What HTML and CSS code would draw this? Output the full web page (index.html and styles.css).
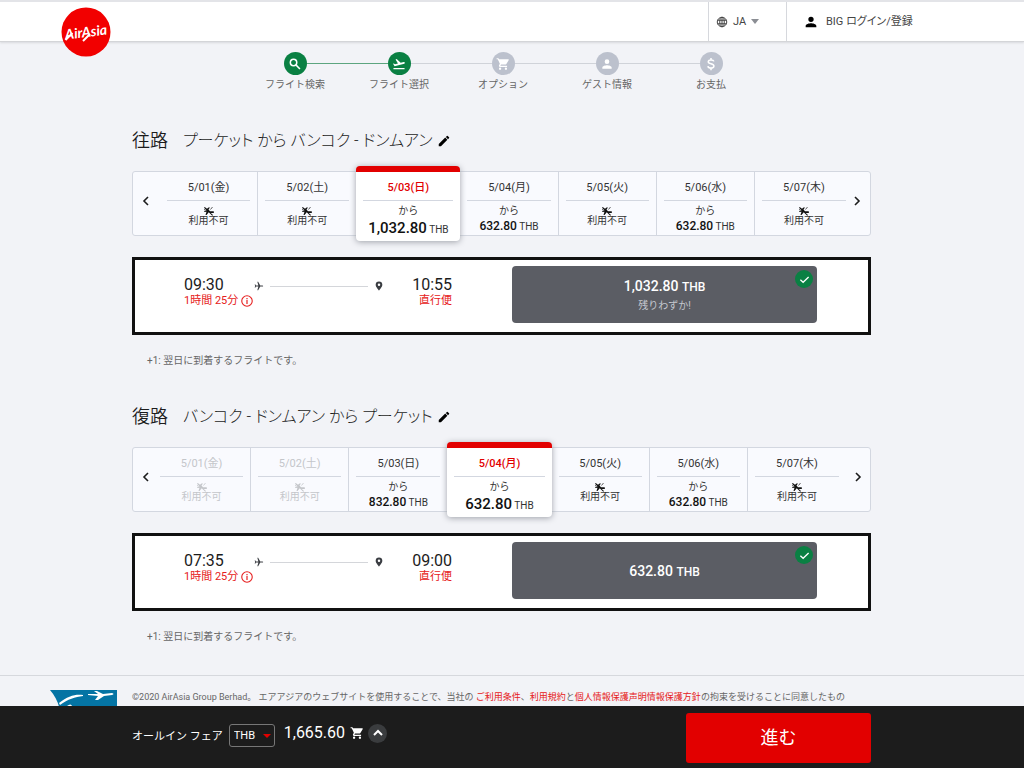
FILE: index.html
```html
<!DOCTYPE html>
<html lang="ja">
<head>
<meta charset="utf-8">
<meta name="viewport" content="width=device-width, initial-scale=1">
<title>AirAsia - フライト選択</title>
<link rel="stylesheet" href="styles.css">
</head>
<body>
<svg class="sprite" aria-hidden="true">
  <symbol id="edit" viewBox="0 0 24 24"><path d="M3 17.200V21h3.800L17.800 9.900l-3.700-3.700L3 17.200zM20.700 7a1 1 0 0 0 0-1.400L18.400 3.300a1 1 0 0 0-1.400 0l-1.800 1.800 3.700 3.700L20.700 7z"/></symbol>
  <symbol id="cart" viewBox="0 0 24 24"><path d="M7 18a2 2 0 1 0 0 4 2 2 0 0 0 0-4zM1 2v2h2l3.600 7.600-1.400 2.400C4.500 15.400 5.500 17 7 17h12v-2H7.400l1.200-2h7.400c.8 0 1.400-.4 1.800-1L21.900 5c.3-.6-.2-1-.9-1H5.200l-1-2H1zm16 16a2 2 0 1 0 0 4 2 2 0 0 0 0-4z"/></symbol>
  <symbol id="person" viewBox="0 0 24 24"><path d="M12 12a4 4 0 1 0 0-8 4 4 0 0 0 0 8zm0 2c-2.700 0-8 1.300-8 4v2h16v-2c0-2.700-5.300-4-8-4z"/></symbol>
  <symbol id="plane" viewBox="0 0 24 24"><path d="M22 12c0-.8-.7-1.300-1.500-1.300H15L10 2H8l2.500 8.700H5L3.500 8.500H1.500L3 12l-1.500 3.500h2L5 13.300h5.500L8 22h2l5-8.700h5.500c.8 0 1.500-.5 1.500-1.300z"/></symbol>
  <symbol id="noplane" viewBox="0 0 24 24"><path d="M22 14c0-1-.7-1.700-1.500-1.700H14L11 9l3-4h-3L8 7.500 3.500 4 2 5.500l5 5-4 1.500-1 2 5-.5-2 6.500h2l4.500-5.500 7 7 1.500-1.500-4.500-4h5c.8 0 1.500-1 1.500-2z"/><path d="M15 9l4-5M2 9l3 1" fill="none" stroke="currentColor" stroke-width="1.600"/></symbol>
  <symbol id="pin" viewBox="0 0 24 24"><path d="M12 1a8 8 0 0 0-8 8c0 5.500 8 14 8 14s8-8.500 8-14a8 8 0 0 0-8-8zm0 11a3 3 0 1 1 0-6 3 3 0 0 1 0 6z"/></symbol>
  <symbol id="info" viewBox="0 0 24 24"><circle cx="12" cy="12" r="10.500" fill="none" stroke="currentColor" stroke-width="2.200"/><path d="M10.800 10h2.400v8h-2.400zM10.800 6h2.400v2.400h-2.400z"/></symbol>
  <symbol id="check" viewBox="0 0 24 24"><path d="M3 12.500l6 5.500L21 6.500" fill="none" stroke="currentColor" stroke-width="2.800"/></symbol>
  <symbol id="left" viewBox="0 0 12 12"><path d="M8 2L4 6l4 4" fill="none" stroke="currentColor" stroke-width="1.600"/></symbol>
  <symbol id="right" viewBox="0 0 12 12"><path d="M4 2l4 4-4 4" fill="none" stroke="currentColor" stroke-width="1.600"/></symbol>
</svg>

<header class="header">
  <a class="logo" href="#" aria-label="AirAsia"><svg viewBox="0 0 50 50" aria-hidden="true"><circle cx="25" cy="25" r="24.500"/><text x="25" y="30" text-anchor="middle" transform="rotate(-7 25 25)">AirAsia</text><path d="M4.500 33q4-4 7-7M22 34q4-4 7-7" fill="none" stroke="#fff" stroke-width="2"/></svg></a>
  <button class="language" type="button">
    <svg class="globe" viewBox="0 0 24 24" aria-hidden="true"><g fill="none" stroke="currentColor" stroke-width="2"><circle cx="12" cy="12" r="9.500"/><ellipse cx="12" cy="12" rx="4.500" ry="9.500"/><path d="M3 8.500h18M3 15.500h18M12 2.500v19"/></g></svg>
    JA<span class="caret"></span>
  </button>
  <button class="login" type="button"><svg aria-hidden="true"><use href="#person"/></svg>BIG ログイン/登録</button>
</header>

<main class="main">
  <ol class="steps">
    <li class="step done joined"><span class="dot"><svg viewBox="0 0 24 24"><g fill="none" stroke="currentColor" stroke-width="2.600"><circle cx="9.500" cy="9.500" r="5.500"/><path d="M13.500 13.500l7 7"/></g></svg></span><span class="label">フライト検索</span></li>
    <li class="step done"><span class="dot"><svg viewBox="0 0 24 24"><path d="M2.500 19h19v2h-19zM22 9.600c-.2-.8-1-1.300-1.800-1.100L14.900 10 8 3.600l-1.900.5 4.100 7.200-5 1.300-2-1.500-1.400.4 2.600 4.500 16.600-4.500c.8-.2 1.200-1 1-1.900z"/></svg></span><span class="label">フライト選択</span></li>
    <li class="step"><span class="dot"><svg><use href="#cart"/></svg></span><span class="label">オプション</span></li>
    <li class="step"><span class="dot"><svg><use href="#person"/></svg></span><span class="label">ゲスト情報</span></li>
    <li class="step"><span class="dot"><svg viewBox="0 0 24 24"><path d="M17 7.500C16.500 5.800 14.700 5 12 5 9.200 5 7.300 6.200 7.300 8.300 7.300 13 17 10.500 17 15.500c0 2.200-2 3.500-5 3.500s-5-1.200-5.300-3.300M12 1.500V5m0 14v3.500" fill="none" stroke="currentColor" stroke-width="2.600"/></svg></span><span class="label">お支払</span></li>
  </ol>

  <section class="leg">
    <div class="title"><h2>往路</h2><p>プーケット から バンコク - ドンムアン</p><button class="edit" type="button" aria-label="編集"><svg><use href="#edit"/></svg></button></div>
    <div class="dates outbound">
      <button class="arrow" type="button" aria-label="前へ"><svg><use href="#left"/></svg></button>
      <button class="day" type="button"><span class="date">5/01(金)</span><svg><use href="#noplane"/></svg><span class="none">利用不可</span></button>
      <button class="day" type="button"><span class="date">5/02(土)</span><svg><use href="#noplane"/></svg><span class="none">利用不可</span></button>
      <button class="day selected" type="button"><span class="date">5/03(日)</span><span class="from">から</span><span class="price"><b>1,032.80</b> THB</span></button>
      <button class="day" type="button"><span class="date">5/04(月)</span><span class="from">から</span><span class="price"><b>632.80</b> THB</span></button>
      <button class="day" type="button"><span class="date">5/05(火)</span><svg><use href="#noplane"/></svg><span class="none">利用不可</span></button>
      <button class="day" type="button"><span class="date">5/06(水)</span><span class="from">から</span><span class="price"><b>632.80</b> THB</span></button>
      <button class="day" type="button"><span class="date">5/07(木)</span><svg><use href="#noplane"/></svg><span class="none">利用不可</span></button>
      <button class="arrow next" type="button" aria-label="次へ"><svg><use href="#right"/></svg></button>
    </div>
    <div class="flight">
      <div class="depart"><span class="time">09:30</span><span class="detail">1時間 25分<svg><use href="#info"/></svg></span></div>
      <div class="route"><svg><use href="#plane"/></svg><span class="track"></span><svg><use href="#pin"/></svg></div>
      <div class="arrive"><span class="time">10:55</span><span class="detail">直行便</span></div>
      <button class="fare" type="button"><span class="amount">1,032.80 <small>THB</small></span><span class="left">残りわずか!</span><span class="tick"><svg><use href="#check"/></svg></span></button>
    </div>
    <p class="note">+1: 翌日に到着するフライトです。</p>
  </section>

  <section class="leg">
    <div class="title"><h2>復路</h2><p>バンコク - ドンムアン から プーケット</p><button class="edit" type="button" aria-label="編集"><svg><use href="#edit"/></svg></button></div>
    <div class="dates inbound">
      <button class="arrow" type="button" aria-label="前へ"><svg><use href="#left"/></svg></button>
      <button class="day" type="button" disabled><span class="date">5/01(金)</span><svg><use href="#noplane"/></svg><span class="none">利用不可</span></button>
      <button class="day" type="button" disabled><span class="date">5/02(土)</span><svg><use href="#noplane"/></svg><span class="none">利用不可</span></button>
      <button class="day" type="button"><span class="date">5/03(日)</span><span class="from">から</span><span class="price"><b>832.80</b> THB</span></button>
      <button class="day selected" type="button"><span class="date">5/04(月)</span><span class="from">から</span><span class="price"><b>632.80</b> THB</span></button>
      <button class="day" type="button"><span class="date">5/05(火)</span><svg><use href="#noplane"/></svg><span class="none">利用不可</span></button>
      <button class="day" type="button"><span class="date">5/06(水)</span><span class="from">から</span><span class="price"><b>632.80</b> THB</span></button>
      <button class="day" type="button"><span class="date">5/07(木)</span><svg><use href="#noplane"/></svg><span class="none">利用不可</span></button>
      <button class="arrow next" type="button" aria-label="次へ"><svg><use href="#right"/></svg></button>
    </div>
    <div class="flight">
      <div class="depart"><span class="time">07:35</span><span class="detail">1時間 25分<svg><use href="#info"/></svg></span></div>
      <div class="route"><svg><use href="#plane"/></svg><span class="track"></span><svg><use href="#pin"/></svg></div>
      <div class="arrive"><span class="time">09:00</span><span class="detail">直行便</span></div>
      <button class="fare" type="button"><span class="amount">632.80 <small>THB</small></span><span class="tick"><svg><use href="#check"/></svg></span></button>
    </div>
    <p class="note">+1: 翌日に到着するフライトです。</p>
  </section>
</main>

<footer class="footer">
  <svg class="badge" viewBox="0 0 67 40" aria-hidden="true"><path d="M0 0h67v40H12C12 24 9 10 0 0z" fill="#0474a4"/><path d="M9 13C18 6 25 4 33 5v1C25 7 18 9 10 15zM38 4h10l-4-3h3l6 3 9-1c2 .5 2 1.500 0 2l-8 1-6 4h-3l3-4-10-1zM17 16q4-3 5 0z" fill="#fff"/></svg>
  <p>©2020 AirAsia Group Berhad。 エアアジアのウェブサイトを使用することで、当社の <a href="#">ご利用条件</a>、<a href="#">利用規約</a>と<a href="#">個人情報保護声明情報保護方針</a>の拘束を受けることに同意したもの</p>
</footer>

<div class="bar">
  <label for="currency">オールイン フェア</label>
  <span class="pick"><select id="currency"><option>THB</option></select></span>
  <div class="summary">
    <span class="total">1,665.60</span>
    <svg class="basket" aria-hidden="true"><use href="#cart"/></svg>
    <button class="expand" type="button" aria-label="詳細"><svg viewBox="0 0 12 12"><path d="M2 8l4-4 4 4" fill="none" stroke="currentColor" stroke-width="2"/></svg></button>
  </div>
  <button class="go" type="button">進む</button>
</div>
</body>
</html>
```
FILE: styles.css
```css
* { box-sizing: border-box; }
body {
  margin: 0;
  min-height: 100vh;
  overflow: hidden;
  background: #f2f3f7;
  color: #1c1c1c;
  font: 400 11px/14px Roboto, "Noto Sans CJK JP", sans-serif;
}
h2, p, ol { margin: 0; padding: 0; font-weight: inherit; }
button { font: inherit; color: inherit; background: none; border: 0; padding: 0; }
svg { fill: currentColor; flex: none; }
.sprite { display: none; }

.header {
  display: flex;
  height: 42px;
  padding-left: 61px;
  background: #fff;
  border-top: 2px solid #e3e4e8;
  border-bottom: 1px solid #d4d5d8;
  box-shadow: 0 1px 2px #d8d9dd;
}
.logo { width: 50px; height: 50px; margin: 5px auto 0 0; z-index: 1; }
.logo svg { display: block; width: 50px; height: 50px; fill: #f20000; }
.logo text { fill: #fff; font: italic 700 14px Lato, sans-serif; }
.language, .login { display: flex; align-items: center; border-left: 1px solid #d6d8dd; color: #444; }
.language { width: 78px; gap: 5px; padding-left: 7px; }
.globe { width: 12px; height: 12px; }
.caret { border: 4px solid transparent; border-top: 5px solid #8b8e94; border-bottom: 0; }
.login { width: 238px; gap: 7px; padding-left: 16px; font-feature-settings: "palt"; }
.login svg { width: 16px; height: 16px; fill: #000; }

.main { padding: 10px 153px 30px 132px; }
.steps { display: grid; grid-template-columns: repeat(5, 104px); justify-content: center; padding-left: 3px; list-style: none; }
.step {
  display: grid;
  grid-template: "before dot after" 23px "label label label" 14px / 1fr 23px 1fr;
  row-gap: 3px;
  align-items: center;
  text-align: center;
  font-size: 10px;
  color: #666;
}
.step::before, .step::after { content: ""; height: 1px; background: #d0d3d9; }
.step::before { grid-area: before; }
.step::after { grid-area: after; }
.step:first-child::before, .step:last-child::after { visibility: hidden; }
.joined::after, .joined + .step::before { background: #5ca57f; }
.label { grid-area: label; }
.dot { grid-area: dot; display: grid; place-items: center; height: 23px; border-radius: 50%; background: #bcc1cd; color: #fff; }
.done .dot { background: #0a8043; }
.dot svg { width: 14px; height: 14px; }

.leg { padding-top: 35px; }
.leg + .leg { padding-top: 34px; }
.title { display: flex; align-items: center; height: 28px; margin-bottom: 16px; }
.title h2 { font-size: 18px; line-height: 28px; font-weight: 350; margin-right: 15px; }
.title p { font-size: 16px; line-height: 28px; font-weight: 300; font-feature-settings: "palt"; }
.edit { display: flex; margin-left: 4px; }
.edit svg { width: 14px; height: 14px; fill: #000; }

.dates { display: grid; height: 65px; border: 1px solid #d3d7e0; border-radius: 3px; background: #f9fafe; }
.outbound { grid-template-columns: 27px 98fr 98fr 104fr 98fr 98fr 98fr 98fr 17px; }
.inbound { grid-template-columns: 20px 98fr 98fr 98fr 104fr 98fr 98fr 98fr 24px; }
.arrow { display: flex; align-items: center; padding: 0 0 6px 7px; }
.arrow svg { width: 12px; height: 12px; }
.outbound .next { padding-left: 0; }
.inbound .next { padding-left: 6px; }
.outbound .next svg { margin-left: -2px; }
.day { display: flex; flex-direction: column; align-items: center; padding: 0 7px; border-right: 1px solid #d3d7e0; font-size: 10px; line-height: 14px; color: #333; }
.day:has(+ .selected), .day:has(+ .next) { border-right: 0; }
.date { align-self: stretch; height: 29px; padding-top: 9px; margin-bottom: 3px; border-bottom: 1px solid #d3d7e0; font-size: 11px; }
.day svg { width: 12px; height: 12px; margin-top: 1px; fill: #111; }
.none { line-height: 12px; margin-top: -2px; }
.price { line-height: 16px; }
.price b { font-size: 12px; font-weight: 500; color: #111; }
.day:disabled { color: #c4c6ca; }
.day:disabled svg { fill: #c4c6ca; }
.selected { margin: -6px 0; background: #fff; border: 0; border-top: 6px solid #e20000; border-radius: 4px; box-shadow: 0 1px 6px #9da0a8; }
.selected .date { color: #e20000; font-weight: 500; }
.selected .price b { font-size: 15px; }
.selected .price { line-height: 20px; }

.flight { display: flex; height: 78px; margin-top: 21px; padding: 6px 51px 0 49px; background: #fff; border: 3px solid #111; }
.time, .detail { display: flex; align-items: center; }
.time { font-size: 16px; line-height: 18px; }
.depart { flex: 0 0 70px; padding-top: 10px; }
.detail { height: 14px; gap: 3px; color: #e62020; font-size: 11px; }
.detail svg { width: 12px; height: 12px; }
.route { flex: 1; display: flex; align-items: center; gap: 6px; height: 10px; margin: 15px 24px 0 0; color: #3a3d42; }
.route svg { width: 10px; height: 10px; }
.track { flex: 1; height: 1px; background: #d4d6da; }
.arrive { display: flex; flex-direction: column; align-items: flex-end; flex: 0 0 44px; padding-top: 10px; }
.fare { position: relative; flex: 0 0 305px; display: flex; flex-direction: column; align-items: center; justify-content: center; gap: 4px; height: 57px; padding-top: 1px; margin-left: 60px; border-radius: 4px; background: #5b5d64; color: #fff; }
.amount { font-size: 14px; line-height: 16px; font-weight: 500; }
.amount small { font-size: 12px; }
.left { font-size: 10px; color: #c4c8cf; }
.tick { position: absolute; top: 4px; right: 4px; display: grid; place-items: center; width: 18px; height: 18px; border-radius: 50%; background: #0a8043; }
.tick svg { width: 11px; height: 11px; }
.note { margin-top: 18px; padding-left: 15px; font-size: 10px; line-height: 16px; color: #666; }

.footer { display: flex; align-items: flex-start; gap: 15px; padding: 14px 153px 0 50px; border-top: 1px solid #d6d8dd; }
.badge { width: 67px; height: 40px; }
.footer p { font-size: 9px; white-space: nowrap; color: #666; }
.footer a { color: #e62020; text-decoration: none; }

.bar { position: fixed; left: 0; right: 0; bottom: 0; display: flex; align-items: center; height: 62px; padding: 0 153px 0 132px; background: #1c1c1c; color: #fff; z-index: 2; }
.pick { display: flex; align-items: center; position: relative; margin: 0 9px 3px 6px; }
.pick::after { content: ""; position: absolute; right: 4px; border: 4px solid transparent; border-top-color: #e20000; border-bottom: 0; pointer-events: none; }
.pick select { appearance: none; width: 46px; height: 23px; padding: 0 0 0 4px; border: 1px solid #777; border-radius: 3px; background: #1c1c1c; color: #fff; font: 400 11px Roboto, sans-serif; }
.summary { display: flex; align-items: center; padding-bottom: 8px; }
.total { font-size: 16px; }
.basket { width: 14px; height: 14px; margin: 0 4px 0 5px; }
.expand { display: grid; place-items: center; width: 19px; height: 19px; border-radius: 50%; background: #3a3c3e; }
.expand svg { width: 12px; height: 12px; }
.go { width: 185px; height: 50px; margin: 2px 0 0 auto; border-radius: 3px; background: #e20000; font-size: 18px; }
```
